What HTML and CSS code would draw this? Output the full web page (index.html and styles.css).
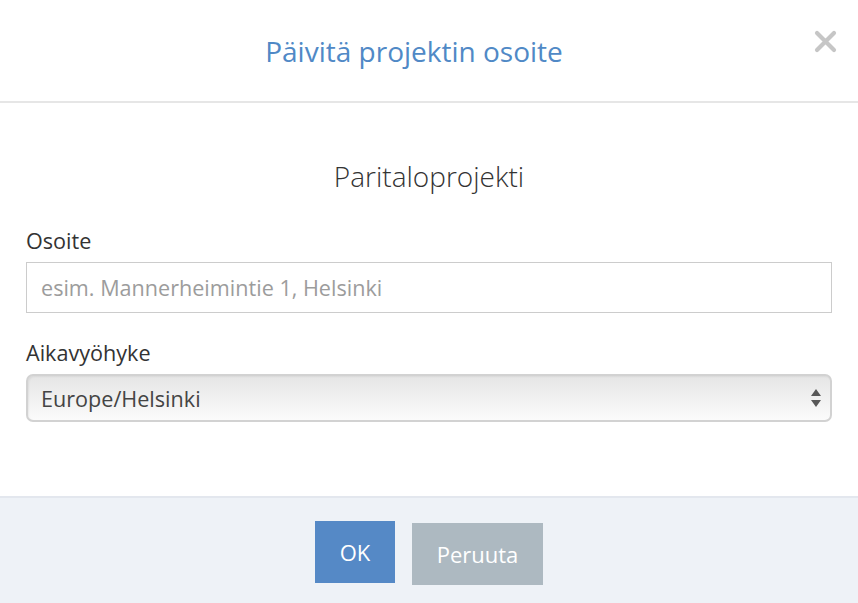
FILE: index.html
```html
<!DOCTYPE html>
<html lang="fi">
<head>
<meta charset="utf-8">
<title>Päivitä projektin osoite</title>
<link rel="stylesheet" href="styles.css">
</head>
<body>
<div class="modal">
  <header class="modal-header">
    <h1 class="modal-title">Päivitä projektin osoite</h1>
    <button class="close" aria-label="Sulje">
      <svg width="23" height="23" viewBox="0 0 23 23"><path d="M3 3 L20 20 M20 3 L3 20" stroke="#c6c6c6" stroke-width="4.2" stroke-linecap="round"/></svg>
    </button>
  </header>
  <main class="modal-body">
    <h2 class="project-name">Paritaloprojekti</h2>
    <label class="field-label" for="addr">Osoite</label>
    <input id="addr" class="text-input" type="text" placeholder="esim. Mannerheimintie 1, Helsinki">
    <label class="field-label second" for="tz">Aikavyöhyke</label>
    <div class="select-wrap">
      <select id="tz" class="select"><option>Europe/Helsinki</option></select>
      <svg class="select-arrows" width="12" height="20" viewBox="0 0 12 20"><path d="M6 1 L11 8 L1 8 Z M1 12 L11 12 L6 19 Z" fill="#585858"/></svg>
    </div>
  </main>
  <footer class="modal-footer">
    <button class="btn btn-ok">OK</button>
    <button class="btn btn-cancel">Peruuta</button>
  </footer>
</div>
</body>
</html>
```
FILE: styles.css
```css
html, body {
  margin: 0;
  padding: 0;
  background: #ffffff;
}
body {
  font-family: "Open Sans", "Noto Sans", sans-serif;
  color: #333;
}
.modal {
  width: 858px;
  height: 603px;
  display: flex;
  flex-direction: column;
  overflow: hidden;
}
.modal-header {
  position: relative;
  height: 101px;
  border-bottom: 2px solid #e6e6e6;
  display: flex;
  align-items: center;
  justify-content: center;
  padding-right: 30px;
  flex: none;
}
.modal-title {
  margin: 0;
  font-size: 28px;
  font-weight: 400;
  color: #5089c6;
  line-height: 36px;
}
.close {
  position: absolute;
  right: 21px;
  top: 30px;
  border: 0;
  background: none;
  padding: 0;
  width: 23px;
  height: 23px;
  display: block;
}
.close svg { display: block; }
.modal-body {
  flex: none;
  padding: 53px 26px 0;
  height: 393px;
  box-sizing: border-box;
  display: flex;
  flex-direction: column;
}
.project-name {
  margin: 0;
  text-align: center;
  font-size: 28px;
  font-weight: 300;
  line-height: 40px;
  color: #333;
}
.field-label {
  display: block;
  margin-top: 33px;
  font-size: 21.6px;
  line-height: 24px;
  color: #333;
}
.field-label.second {
  margin-top: 28px;
}
.text-input {
  margin-top: 9px;
  height: 51px;
  box-sizing: border-box;
  width: 100%;
  border: 1px solid #cccccc;
  border-radius: 0;
  padding: 0 14px;
  font-family: "Open Sans", "Noto Sans", sans-serif;
  font-size: 21.6px;
  color: #444;
  outline: none;
}
.text-input::placeholder {
  color: #9c9c9c;
}
.select-wrap {
  position: relative;
  margin-top: 9px;
  height: 48px;
}
.select {
  appearance: none;
  -webkit-appearance: none;
  width: 100%;
  height: 48px;
  box-sizing: border-box;
  border: 2px solid #d2d2d2;
  border-radius: 7px;
  background: linear-gradient(#e5e5e5, #f0f0f0 50%, #fbfbfb);
  padding: 0 13px;
  font-family: "Open Sans", "Noto Sans", sans-serif;
  font-size: 21.6px;
  color: #444;
  outline: none;
  box-shadow: inset 1px 1px 2px rgba(0,0,0,0.06);
}
.select-arrows {
  position: absolute;
  right: 10px;
  top: 14px;
  pointer-events: none;
}
.modal-footer {
  flex: 1;
  background: #eef2f7;
  border-top: 2px solid #e3e7ee;
  display: flex;
  justify-content: center;
  align-items: flex-start;
  gap: 17px;
}
.btn {
  border: 0;
  border-radius: 0;
  height: 62px;
  font-family: "Open Sans", "Noto Sans", sans-serif;
  font-size: 22px;
  color: #ffffff;
  padding: 0;
}
.btn-ok {
  margin-top: 23px;
  width: 80px;
  background: #5589c6;
}
.btn-cancel {
  margin-top: 25px;
  width: 131px;
  background: #adb9c1;
}
```
